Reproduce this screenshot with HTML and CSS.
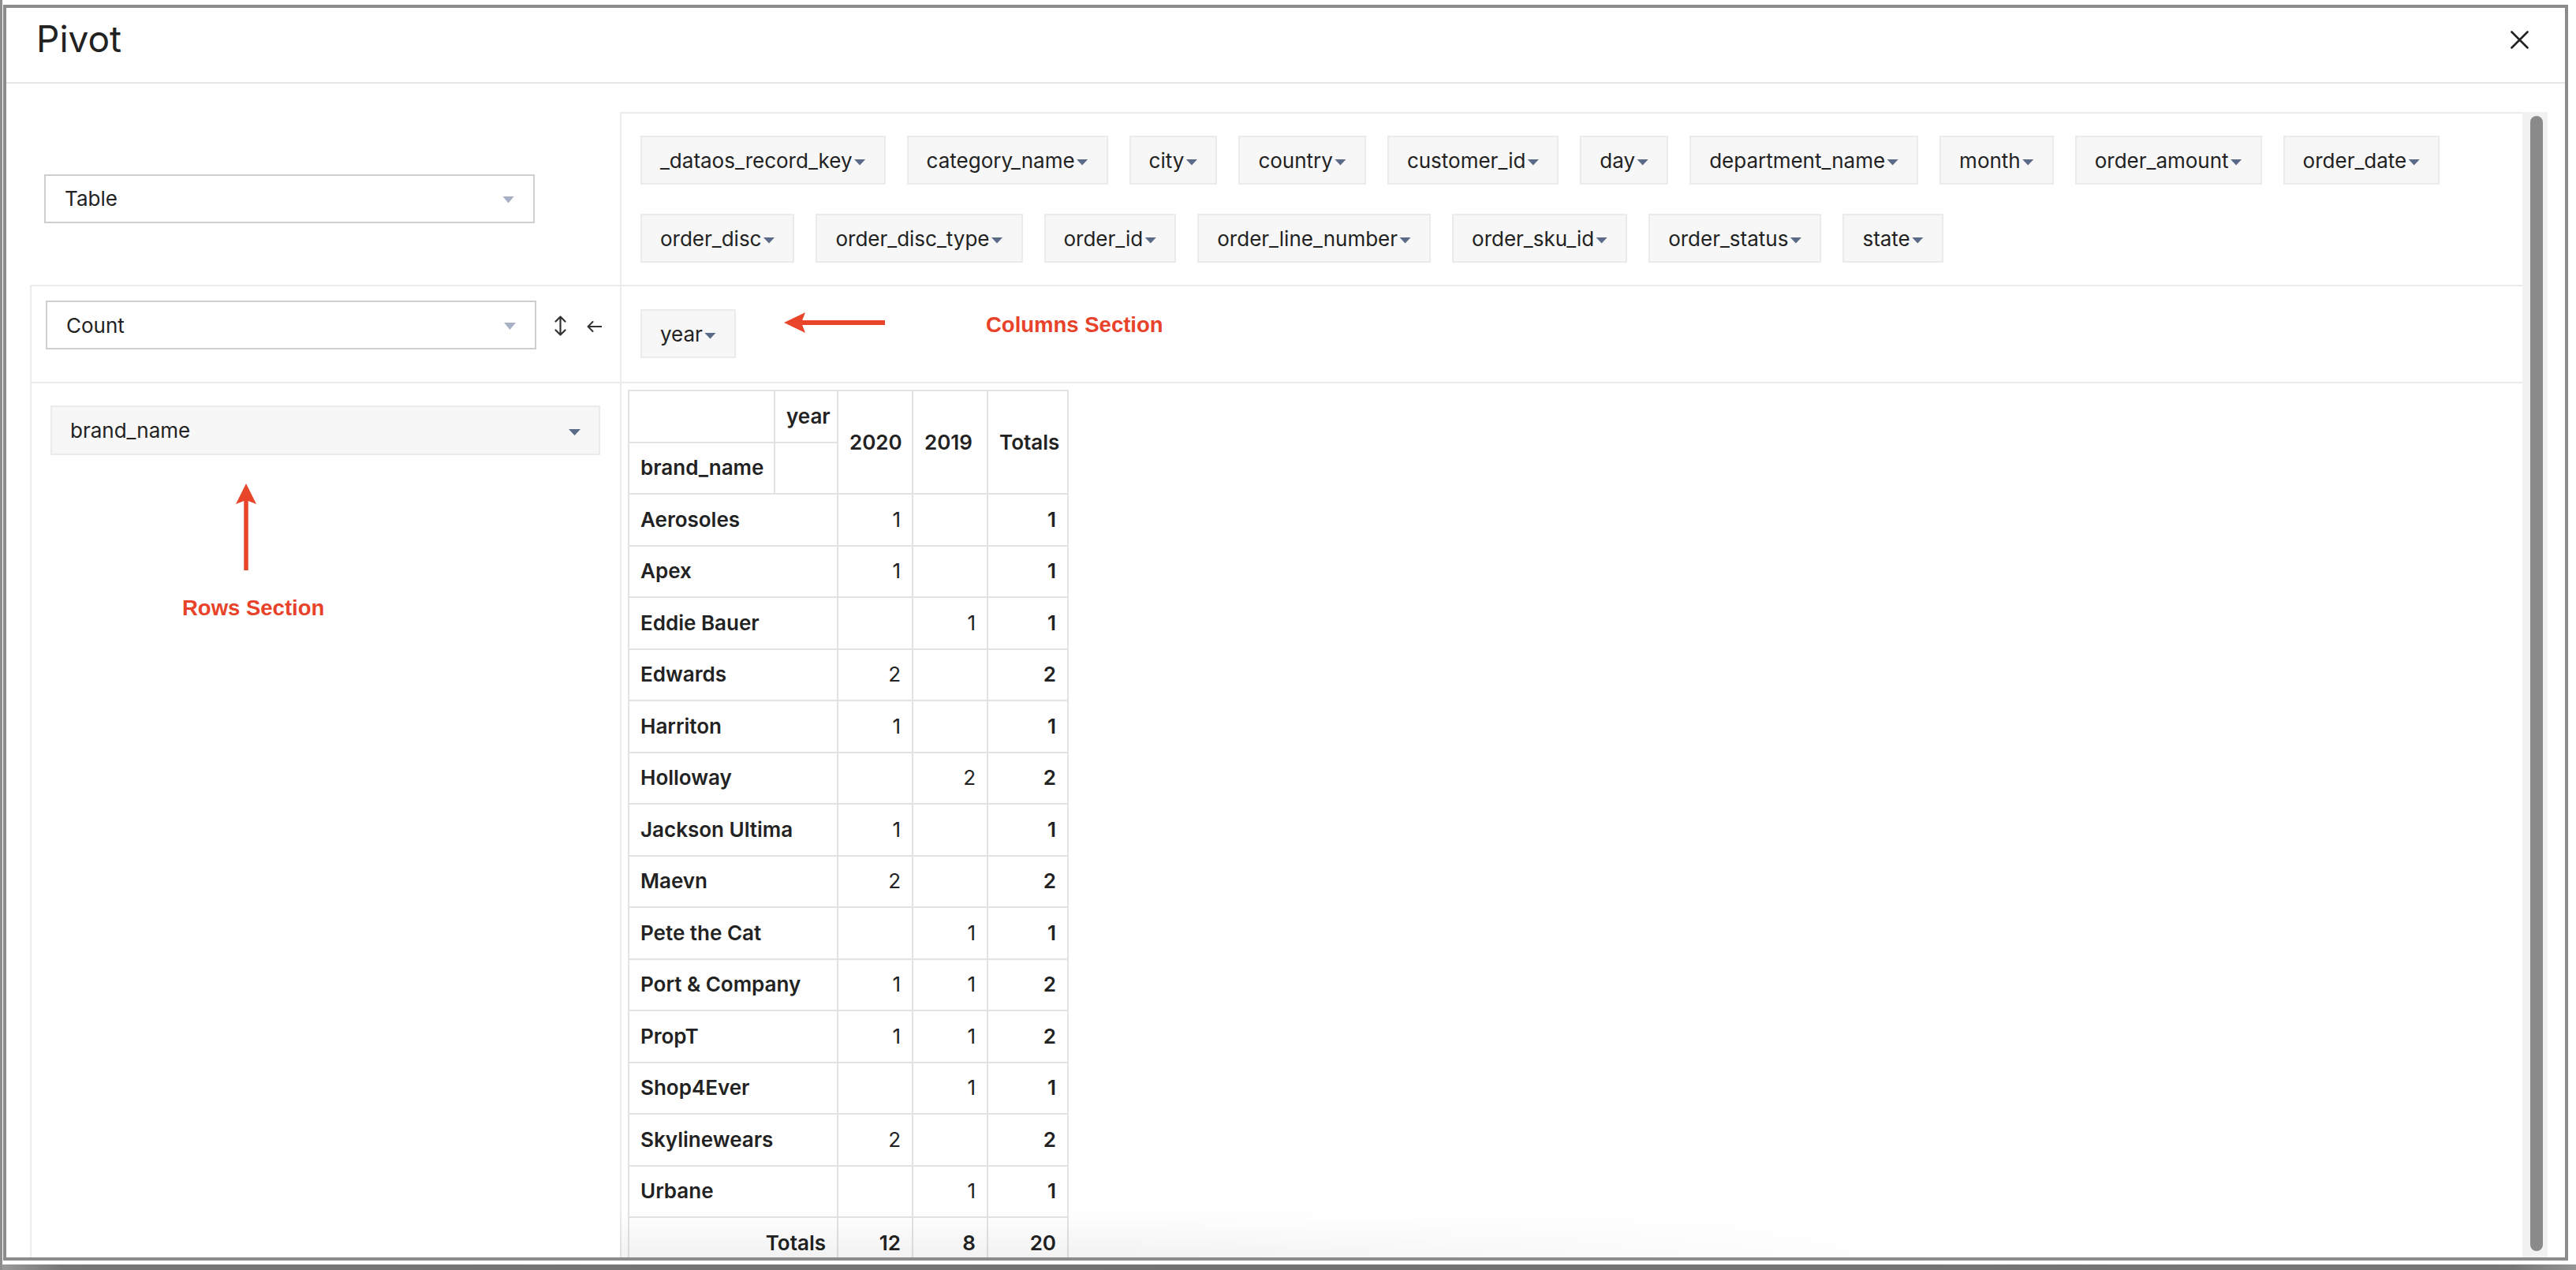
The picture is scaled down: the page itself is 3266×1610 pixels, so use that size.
FILE: index.html
```html
<!DOCTYPE html>
<html lang="en">
<head>
<meta charset="utf-8">
<title>Pivot</title>
<link rel="stylesheet" href="styles.css">
</head>
<body>
<div class="page">
  <div class="edge-dark"></div>
  <div class="modal">
    <header class="modal-head">
      <h1 class="modal-title">Pivot</h1>
      <button class="close" aria-label="Close">
        <svg width="23" height="23" viewBox="0 0 23 23"><path d="M1.5 1.5 L21.5 21.5 M21.5 1.5 L1.5 21.5" stroke="#222" stroke-width="2.6" stroke-linecap="round" fill="none"/></svg>
      </button>
    </header>
    <div class="modal-body">
      <div class="viewport">
        <div class="pvt-ui">
          <div class="cell renderers">
            <div class="select"><span>Table</span><i class="sel-tri"></i></div>
          </div>
          <div class="cell unused">
            <span class="chip">_dataos_record_key<i class="tri"></i></span>
            <span class="chip">category_name<i class="tri"></i></span>
            <span class="chip">city<i class="tri"></i></span>
            <span class="chip">country<i class="tri"></i></span>
            <span class="chip">customer_id<i class="tri"></i></span>
            <span class="chip">day<i class="tri"></i></span>
            <span class="chip">department_name<i class="tri"></i></span>
            <span class="chip">month<i class="tri"></i></span>
            <span class="chip">order_amount<i class="tri"></i></span>
            <span class="chip">order_date<i class="tri"></i></span>
            <span class="chip">order_disc<i class="tri"></i></span>
            <span class="chip">order_disc_type<i class="tri"></i></span>
            <span class="chip">order_id<i class="tri"></i></span>
            <span class="chip">order_line_number<i class="tri"></i></span>
            <span class="chip">order_sku_id<i class="tri"></i></span>
            <span class="chip">order_status<i class="tri"></i></span>
            <span class="chip">state<i class="tri"></i></span>
          </div>
          <div class="cell vals">
            <div class="select"><span>Count</span><i class="sel-tri"></i></div>
            <svg class="icon-sort" width="15" height="26" viewBox="0 0 15 26"><path d="M7.5 1.5 V24.5 M1.5 7.5 L7.5 1.5 L13.5 7.5 M1.5 18.5 L7.5 24.5 L13.5 18.5" stroke="#333" stroke-width="2.2" fill="none" stroke-linecap="round" stroke-linejoin="round"/></svg>
            <svg class="icon-back" width="19" height="14" viewBox="0 0 19 14"><path d="M1.5 7 H18.5 M7.5 1 L1.5 7 L7.5 13" stroke="#333" stroke-width="2" fill="none" stroke-linecap="round" stroke-linejoin="round"/></svg>
          </div>
          <div class="cell cols">
            <span class="chip">year<i class="tri"></i></span>
            <svg class="anno-arrow-h" width="128" height="26" viewBox="0 0 128 26"><path d="M20 13 H128" stroke="#e8452b" stroke-width="6"/><path d="M0 13 L27 0 L22 13 L27 26 Z" fill="#e8452b"/></svg>
            <span class="anno-text anno-cols">Columns Section</span>
          </div>
          <div class="cell rows">
            <span class="chip chip-block">brand_name<i class="tri"></i></span>
            <svg class="anno-arrow-v" width="26" height="110" viewBox="0 0 26 110"><path d="M13 20 V110" stroke="#e8452b" stroke-width="5.5"/><path d="M13 0 L26 26 L13 21 L0 26 Z" fill="#e8452b"/></svg>
            <span class="anno-text anno-rows">Rows Section</span>
          </div>
          <div class="cell output">
            <table class="pvt-table">
              <colgroup>
                <col class="c-label"><col class="c-axis"><col class="c-val"><col class="c-val"><col class="c-total">
              </colgroup>
              <thead>
                <tr>
                  <th></th>
                  <th class="axis-label">year</th>
                  <th class="col-head" rowspan="2">2020</th>
                  <th class="col-head" rowspan="2">2019</th>
                  <th class="col-head" rowspan="2">Totals</th>
                </tr>
                <tr>
                  <th>brand_name</th>
                  <th></th>
                </tr>
              </thead>
              <tbody>
                <tr><th colspan="2">Aerosoles</th><td>1</td><td></td><td class="tot">1</td></tr>
                <tr><th colspan="2">Apex</th><td>1</td><td></td><td class="tot">1</td></tr>
                <tr><th colspan="2">Eddie Bauer</th><td></td><td>1</td><td class="tot">1</td></tr>
                <tr><th colspan="2">Edwards</th><td>2</td><td></td><td class="tot">2</td></tr>
                <tr><th colspan="2">Harriton</th><td>1</td><td></td><td class="tot">1</td></tr>
                <tr><th colspan="2">Holloway</th><td></td><td>2</td><td class="tot">2</td></tr>
                <tr><th colspan="2">Jackson Ultima</th><td>1</td><td></td><td class="tot">1</td></tr>
                <tr><th colspan="2">Maevn</th><td>2</td><td></td><td class="tot">2</td></tr>
                <tr><th colspan="2">Pete the Cat</th><td></td><td>1</td><td class="tot">1</td></tr>
                <tr><th colspan="2">Port &amp; Company</th><td>1</td><td>1</td><td class="tot">2</td></tr>
                <tr><th colspan="2">PropT</th><td>1</td><td>1</td><td class="tot">2</td></tr>
                <tr><th colspan="2">Shop4Ever</th><td></td><td>1</td><td class="tot">1</td></tr>
                <tr><th colspan="2">Skylinewears</th><td>2</td><td></td><td class="tot">2</td></tr>
                <tr><th colspan="2">Urbane</th><td></td><td>1</td><td class="tot">1</td></tr>
                <tr class="totals-row"><th colspan="2" class="totals-label">Totals</th><td class="tot">12</td><td class="tot">8</td><td class="tot">20</td></tr>
              </tbody>
            </table>
          </div>
        </div>
      </div>
      <div class="scrollbar"><div class="thumb"></div></div>
    </div>
  </div>
  <div class="bottom-band"></div>
</div>
</body>
</html>
```

FILE: styles.css
```css
* {
  box-sizing: border-box;
  margin: 0;
  padding: 0;
}

body {
  margin: 0;
  background: #ffffff;
  font-family: Inter, "Noto Sans", sans-serif;
  color: #222222;
}

.page {
  width: 3266px;
  height: 1610px;
  position: relative;
  overflow: hidden;
  border-left: 3px solid #8c8c8c;
  padding: 6px 0 0 1px;
  display: flex;
  flex-direction: column;
}

.edge-dark {
  position: absolute;
  left: -3px;
  top: 0;
  width: 3px;
  height: 60px;
  background: #0c1424;
}

.modal {
  width: 3252px;
  height: 1592px;
  flex: none;
  border: 4px solid #8c8c8c;
  background: #ffffff;
  display: flex;
  flex-direction: column;
}

.modal-head {
  height: 96px;
  flex: none;
  border-bottom: 2px solid #e6e6e6;
  display: flex;
  justify-content: space-between;
  align-items: flex-start;
  padding: 11px 46px 0 38px;
}

.modal-title {
  font-size: 46px;
  font-weight: 400;
  line-height: 56px;
  color: #222222;
}

.close {
  border: none;
  background: none;
  margin-top: 18px;
  width: 23px;
  height: 23px;
  display: block;
}

.close svg {
  display: block;
}

.modal-body {
  flex: 1;
  min-height: 0;
  display: flex;
  padding: 36px 22px 0 30px;
}

.viewport {
  flex: 1;
  overflow: hidden;
  position: relative;
}

.viewport::after {
  content: "";
  position: absolute;
  left: 748px;
  right: 0;
  bottom: 0;
  height: 60px;
  background: linear-gradient(to bottom, rgba(0, 0, 0, 0), rgba(0, 0, 0, 0.05));
  -webkit-mask-image: linear-gradient(to right, #000 0, #000 25%, transparent 70%);
  mask-image: linear-gradient(to right, #000 0, #000 25%, transparent 70%);
  pointer-events: none;
}

.scrollbar {
  width: 32px;
  flex: none;
  background: #f1f1f1;
  padding: 5px 6px 8px 10px;
}

.thumb {
  height: 100%;
  background: #8a8a8a;
  border-radius: 8px;
}

.bottom-band {
  margin-top: 5px;
  height: 7px;
  flex: none;
  margin-left: -4px;
  background: linear-gradient(90deg, #9a9a9a 0, #777777 80px, #727272 50%, #777777 calc(100% - 80px), #959595 100%);
}

/* pivot ui */
.pvt-ui {
  display: grid;
  grid-template-columns: 748px 2412px;
  grid-template-rows: 219px 123px auto;
  min-height: 1460px;
}

.cell {
  position: relative;
}

.renderers {
  display: flex;
  align-items: center;
  padding-left: 18px;
}

.unused,
.vals,
.cols,
.rows,
.output {
  border-top: 2px solid #ebebeb;
  border-left: 2px solid #ebebeb;
}

.unused {
  display: flex;
  flex-wrap: wrap;
  align-content: flex-start;
  gap: 37px 27px;
  padding: 28px 24px;
}

.vals {
  display: flex;
  align-items: flex-start;
  padding: 18px 18px 0 18px;
}

.vals .icon-sort {
  margin-left: 23px;
  margin-top: 19px;
  flex: none;
}

.vals .icon-back {
  margin-left: 26px;
  margin-top: 26px;
  flex: none;
}

.cols {
  padding: 29px 24px;
}

.rows {
  padding: 28px 25px 0 24px;
}

.output {
  padding: 8px;
}

.select {
  width: 622px;
  height: 62px;
  border: 2px solid #cfcfcf;
  background: #ffffff;
  display: flex;
  align-items: center;
  justify-content: space-between;
  padding: 0 24px;
  font-size: 26px;
  color: #222222;
  flex: none;
}

.sel-tri {
  display: block;
  width: 15px;
  height: 9px;
  background: #a7b0c4;
  clip-path: polygon(0 0, 100% 0, 50% 100%);
  margin-top: 3px;
}

.chip {
  display: inline-flex;
  align-items: center;
  height: 62px;
  padding: 0 23px;
  background: #f7f7f7;
  border: 2px solid #ebebeb;
  font-size: 26px;
  color: #222222;
  white-space: nowrap;
}

.chip-block {
  display: flex;
  justify-content: space-between;
  height: 63px;
  padding: 0 23px;
}

.tri {
  display: inline-block;
  width: 15px;
  height: 8px;
  margin-left: 2px;
  margin-top: 5px;
  background: #5b6b87;
  clip-path: polygon(0 0, 100% 0, 50% 100%);
}

/* annotations */
.anno-arrow-h {
  position: absolute;
  left: 206px;
  top: 33px;
}

.anno-arrow-v {
  position: absolute;
  left: 259px;
  top: 127px;
}

.anno-text {
  position: absolute;
  font-family: "Liberation Sans", Arial, sans-serif;
  font-weight: 700;
  font-size: 27.5px;
  line-height: 27.5px;
  color: #e8432a;
  white-space: nowrap;
}

.anno-cols {
  left: 462px;
  top: 35px;
}

.anno-rows {
  left: 191px;
  top: 271px;
}

/* output table */
.pvt-table {
  border-collapse: collapse;
  table-layout: fixed;
  width: 557px;
  font-size: 26px;
  line-height: 32px;
  color: #222222;
}

.c-label { width: 185px; }
.c-axis { width: 80px; }
.c-val { width: 95px; }
.c-total { width: 102px; }

.pvt-table th,
.pvt-table td {
  border: 2px solid #e3e3e3;
  padding: 15.75px 14px;
  white-space: nowrap;
}

.pvt-table th {
  font-weight: 600;
  text-align: left;
}

.pvt-table th.axis-label {
  text-align: right;
}

.pvt-table th.col-head {
  text-align: left;
}

.pvt-table td {
  text-align: right;
  font-weight: 400;
}

.pvt-table td.tot {
  font-weight: 600;
}

.pvt-table th.totals-label {
  text-align: right;
}
```
